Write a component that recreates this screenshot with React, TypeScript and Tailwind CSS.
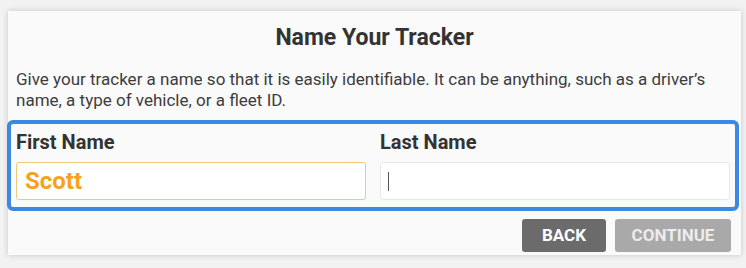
import { useState } from "react";

export default function App() {
  const [first, setFirst] = useState("Scott");
  const [last, setLast] = useState("");

  return (
    <div className="w-[746px] h-[268px] bg-[#f2f2f2] pt-[11px] pl-[8px] pr-[5px] font-['Roboto',sans-serif]">
      <div className="w-[733px] h-[244px] bg-[#fafafa] shadow-[0_0_6px_rgba(0,0,0,0.18)] flex flex-col">
        {/* Header */}
        <h1 className="text-center text-[23px] leading-[28px] font-bold text-[#333] pt-[13px]">
          Name Your Tracker
        </h1>
        <p className="px-[8px] pt-[17px] text-[17px] leading-[21px] text-[#3d3d3d]">
          Give your tracker a name so that it is easily identifiable. It can be anything, such as a driver’s
          name, a type of vehicle, or a fleet ID.
        </p>

        {/* Name fields */}
        <div className="mt-[9px] -ml-[1px] w-[732px] border-4 border-[#3a89e4] rounded-[6px] pt-[8px] pb-[7px] px-[5px] grid grid-cols-2 gap-x-[14px]">
          <div className="flex flex-col gap-[10px]">
            <label className="text-[20px] leading-[20px] font-bold text-[#333]">First Name</label>
            <input
              value={first}
              onChange={(e) => setFirst(e.target.value)}
              className="h-[38px] bg-white border border-[#f3c778] rounded-[3px] px-[8px] text-[24px] font-bold text-[#f5a31f] outline-none"
            />
          </div>
          <div className="flex flex-col gap-[10px]">
            <label className="text-[20px] leading-[20px] font-bold text-[#333]">Last Name</label>
            <div className="relative">
              <input
                value={last}
                onChange={(e) => setLast(e.target.value)}
                className="w-full h-[38px] bg-white border border-[#e8e8e8] rounded-[3px] px-[8px] text-[20px] text-[#333] outline-none"
              />
              <span className="absolute left-[8px] top-[10px] w-[1px] h-[19px] bg-[#555]" />
            </div>
          </div>
        </div>

        {/* Actions */}
        <div className="flex justify-end gap-[9px] pr-[10px] mt-[8px]">
          <button className="w-[84px] h-[33px] rounded-[3px] bg-[#6b6b6b] text-white text-[17px] font-bold">
            BACK
          </button>
          <button className="w-[116px] h-[33px] rounded-[3px] bg-[#a9a9a9] text-[#ececec] text-[17px] font-bold">
            CONTINUE
          </button>
        </div>
      </div>
    </div>
  );
}
